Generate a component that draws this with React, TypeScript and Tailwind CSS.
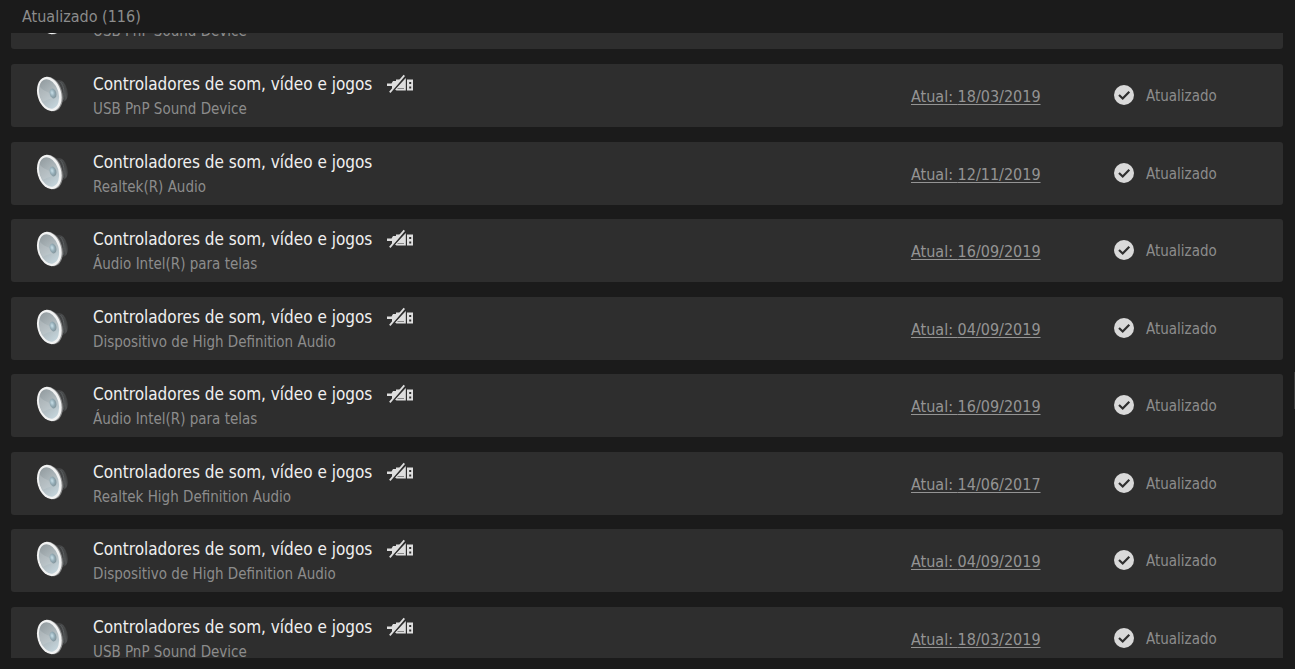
type Device = { name: string; date: string; unplugged: boolean };

const TOTAL = 116;
const CATEGORY = "Controladores de som, vídeo e jogos";

const devices: Device[] = [
  { name: "USB PnP Sound Device", date: "18/03/2019", unplugged: true },
  { name: "Realtek(R) Audio", date: "12/11/2019", unplugged: false },
  { name: "Áudio Intel(R) para telas", date: "16/09/2019", unplugged: true },
  { name: "Dispositivo de High Definition Audio", date: "04/09/2019", unplugged: true },
  { name: "Áudio Intel(R) para telas", date: "16/09/2019", unplugged: true },
  { name: "Realtek High Definition Audio", date: "14/06/2017", unplugged: true },
  { name: "Dispositivo de High Definition Audio", date: "04/09/2019", unplugged: true },
  { name: "USB PnP Sound Device", date: "18/03/2019", unplugged: true },
];

function SpeakerDefs() {
  return (
    <svg width="0" height="0" className="absolute" aria-hidden="true">
      <defs>
        <linearGradient id="magnet" x1="0" x2="1">
          <stop offset="0" stopColor="#666a6b" />
          <stop offset="0.5" stopColor="#3b3d3e" />
          <stop offset="0.75" stopColor="#505253" />
          <stop offset="1" stopColor="#3a3b3b" />
        </linearGradient>
        <linearGradient id="cone" x1="0.2" y1="0" x2="0.5" y2="1">
          <stop offset="0" stopColor="#929b9f" />
          <stop offset="0.5" stopColor="#acb6ba" />
          <stop offset="1" stopColor="#c3d3da" />
        </linearGradient>
        <radialGradient id="cap" cx="0.4" cy="0.4" r="0.6">
          <stop offset="0" stopColor="#c9e0e9" />
          <stop offset="0.6" stopColor="#92aab4" />
          <stop offset="1" stopColor="#83959c" />
        </radialGradient>
      </defs>
    </svg>
  );
}

function SpeakerIcon() {
  return (
    <svg width="36" height="40" viewBox="0 0 36 40" className="shrink-0" aria-hidden="true">
      <ellipse cx="26" cy="17" rx="6.500" ry="11" transform="rotate(-14 26 17)" fill="url(#magnet)" />
      <path d="M18 5.500L25 6.500C29 9 31 15 29.500 22L27 29L21 34Z" fill="#424445" opacity="0.8" />
      <path d="M25.500 8C29 12 30 19 28 26" fill="none" stroke="#5d6162" strokeWidth="1" />
      <ellipse cx="15.500" cy="20" rx="11.800" ry="17.600" transform="rotate(-16 15.500 20)" fill="#8b8c8c" />
      <ellipse cx="14.300" cy="20" rx="11.800" ry="17.500" transform="rotate(-16 14.300 20)" fill="#f1f2f2" />
      <ellipse cx="14" cy="20" rx="9.600" ry="15" transform="rotate(-16 14 20)" fill="url(#cone)" />
      <path d="M5 13C9 17 14 19 17 19L18 24C13 25 10 27 8 28C5 24 3 17 5 13Z" fill="#cdd5d8" opacity="0.3" />
      <ellipse cx="18" cy="19.500" rx="3.300" ry="5" transform="rotate(-16 18 19.500)" fill="url(#cap)" />
    </svg>
  );
}

function UnpluggedIcon() {
  return (
    <svg width="32" height="24" viewBox="0 0 32 24" role="img" aria-label="Desconectado" className="shrink-0">
      <path d="M3 11.500H7.500L9 9H12V7.500H18L8 18V14H3Z" fill="#dedede" />
      <path d="M21.800 6V18.500H12.500L11 17.500Z" fill="#dedede" />
      <path d="M13.500 16.500H20" stroke="#858585" strokeWidth="1" />
      <path d="M7.500 20.500L22 3.500" stroke="#2e2e2e" strokeWidth="1.200" />
      <path d="M5.800 20.300L20.300 3.300" stroke="#dedede" strokeWidth="1.800" />
      <path d="M23 7.500H29V18.500H23Z" fill="#dedede" />
      <path d="M25.200 10H27.200V12H25.200ZM25.200 14.500H27.200V16.500H25.200Z" fill="#2e2e2e" />
    </svg>
  );
}

function CheckIcon() {
  return (
    <svg width="20" height="20" viewBox="0 0 20 20" className="shrink-0" aria-hidden="true">
      <circle cx="10" cy="10" r="10" fill="#d9d9d9" />
      <path d="M5 10L8.700 13.500L15.300 6.800" fill="none" stroke="#2e2e2e" strokeWidth="2.200" />
    </svg>
  );
}

function DeviceRow({ device }: { device: Device }) {
  return (
    <li className="flex h-[63px] shrink-0 items-center rounded-[3px] bg-[#2e2e2e] pl-6 odd:mb-[15px] even:mb-[14px]">
      <div className="pb-1">
        <SpeakerIcon />
      </div>
      <div className="ml-[22px] min-w-0 flex-1 pt-[3px]">
        <div className="flex h-6 items-center gap-3">
          <h2 className="text-[17px] leading-6 whitespace-nowrap text-[#f0f0f0]">{CATEGORY}</h2>
          {device.unplugged && <UnpluggedIcon />}
        </div>
        <p className="text-[15px] leading-[27px] text-[#8c8c8c]">{device.name}</p>
      </div>
      <a
        href="#detalhes"
        className="w-[203px] pt-[2px] text-[16px] text-[#949494] underline decoration-1 underline-offset-2"
      >
        Atual: {device.date}
      </a>
      <div className="flex w-[169px] items-center gap-3 pb-px text-[15px] text-[#8c8c8c]">
        <CheckIcon />
        <span className="pt-[3px]">Atualizado</span>
      </div>
    </li>
  );
}

/* Tail of the row that is scrolled under the header. */
function ScrolledRow({ name }: { name: string }) {
  return (
    <li className="flex h-4 shrink-0 items-end overflow-hidden rounded-b-[3px] bg-[#2e2e2e] pl-6">
      <div className="pb-3">
        <SpeakerIcon />
      </div>
      <p className="ml-[22px] pb-1 text-[15px] leading-[27px] text-[#8c8c8c]">{name}</p>
    </li>
  );
}

export default function App() {
  return (
    <main className="flex h-screen flex-col bg-[#1b1b1b] pb-[11px] font-['DejaVu_Sans_Condensed','DejaVu_Sans',sans-serif]">
      <SpeakerDefs />
      <h1 className="h-[33px] shrink-0 pt-px pl-[22px] text-[16px] leading-8 text-[#8c8c8c]">
        {`Atualizado (${TOTAL})`}
      </h1>
      <div className="flex min-h-0 flex-1">
        <ul className="ml-[11px] flex min-w-0 flex-1 flex-col overflow-hidden">
          <ScrolledRow name="USB PnP Sound Device" />
          <li aria-hidden="true" className="h-[15px] shrink-0" />
          {devices.map((device, i) => (
            <DeviceRow key={i} device={device} />
          ))}
        </ul>
        <div className="flex w-3 shrink-0 justify-end pt-[339px]">
          <div className="h-[37px] w-px bg-[#3a3a3a]" />
        </div>
      </div>
    </main>
  );
}
